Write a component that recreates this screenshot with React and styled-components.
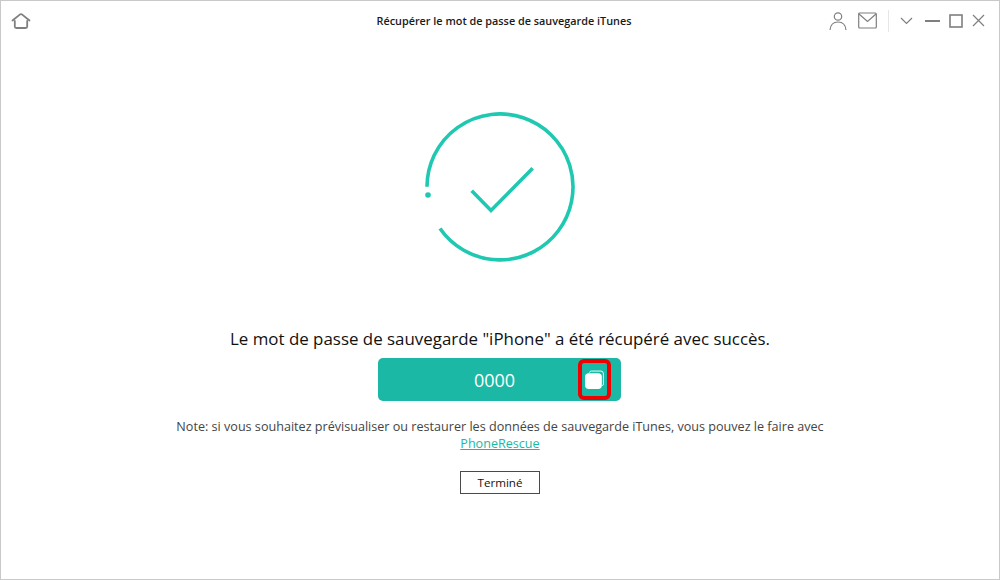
import React from "react"
import styled, { createGlobalStyle } from "styled-components"

const GlobalStyle = createGlobalStyle`
  html, body {
    margin: 0;
    padding: 0;
    background: #fff;
  }
  * {
    box-sizing: border-box;
  }
`

const Window = styled.div`
  width: 1000px;
  height: 580px;
  display: flex;
  flex-direction: column;
  background: #fff;
  border: 1px solid #c9c9c9;
  font-family: "Open Sans", "Noto Sans", sans-serif;
  color: #111;
  overflow: hidden;
`

const TitleBar = styled.header`
  height: 39px;
  flex: none;
  display: grid;
  grid-template-columns: 200px 1fr 200px;
  align-items: center;
`

const HomeButton = styled.div`
  display: flex;
  padding-left: 10px;
`

const Title = styled.h1`
  margin: 0;
  padding-left: 8px;
  text-align: center;
  font-size: 10.85px;
  font-weight: 600;
  color: #1a1a1a;
`

const WindowTools = styled.div`
  display: flex;
  justify-content: flex-end;
  align-items: center;
  padding-right: 14px;
`

const Divider = styled.span`
  width: 1px;
  height: 22px;
  background: #e6e6e6;
  margin: 0 10px 0 11px;
`

const Tool = styled.svg`
  display: block;
  flex: none;
  margin-left: ${(p) => p.$gap || 0}px;
  fill: none;
  stroke: #7f7f7f;
  stroke-width: ${(p) => p.$weight || 1.2};
`

const Main = styled.main`
  flex: 1;
  display: flex;
  flex-direction: column;
  align-items: center;
  padding-top: 70px;
`

const Message = styled.p`
  margin: 58px 0 0;
  font-size: 16.9px;
  line-height: 22px;
  color: #111;
`

const Result = styled.div`
  position: relative;
  width: 243px;
  height: 43px;
  margin: 8px 1px 0 0;
  padding-right: 10px;
  border-radius: 5px;
  background: #1ab8a5;
  display: flex;
  align-items: center;
  justify-content: center;
  color: #fff;
  font-size: 18px;
`

const CopyHighlight = styled.div`
  position: absolute;
  top: 1px;
  left: 200px;
  width: 33px;
  height: 41px;
  border: 4px solid #f00000;
  border-radius: 6px;
  display: flex;
  align-items: center;
  justify-content: center;
`

const Note = styled.p`
  margin: 17px 0 0;
  width: 700px;
  text-align: center;
  font-size: 12.6px;
  line-height: 17px;
  color: #444;
`

const NoteLink = styled.a`
  color: #1ab8a5;
  text-decoration: underline;
`

const DoneButton = styled.button`
  width: 80px;
  height: 23px;
  margin-top: 19px;
  padding: 0;
  background: #fff;
  border: 1px solid #4a4a4a;
  border-radius: 0;
  font-family: inherit;
  font-size: 11.6px;
  color: #111;
`

const SuccessIcon = () => (
  <svg width="160" height="160" viewBox="0 0 160 160" fill="none" stroke="#1fc8b0" strokeWidth="3.6">
    {/* center of the ring sits at 80,77 */}
    <path d="M7 76.7 A73 73 0 1 1 20 118.5" />
    <circle cx="8" cy="85" r="2.8" fill="#1fc8b0" stroke="none" />
    <path d="M51.7 80.7 L71 100.4 L112.7 58.3" />
  </svg>
)

const App = () => {
  return (
    <>
      <GlobalStyle />
      <Window>
        <TitleBar>
          <HomeButton>
            <svg width="20" height="18" viewBox="0 0 20 18" fill="none" stroke="#7f7f7f" strokeWidth="1.8" strokeLinejoin="round" strokeLinecap="round">
              <path d="M1.5 8.5 L8.8 2.6 Q10 1.8 11.2 2.6 L18.5 8.5" />
              <path d="M3.8 9 V14.5 Q3.8 16 5.3 16 H14.7 Q16.2 16 16.2 14.5 V9" />
            </svg>
          </HomeButton>
          <Title>Récupérer le mot de passe de sauvegarde iTunes</Title>
          <WindowTools>
            <Tool width="18" height="20" viewBox="0 0 18 20">
              <circle cx="9" cy="5.5" r="3.7" />
              <path d="M1 19 C1.5 13.5 5 11 9 11 C13 11 16.5 13.5 17 19" />
            </Tool>
            <Tool width="19" height="17" viewBox="0 0 19 17" $gap={11}>
              <rect x="0.7" y="1" width="17.6" height="15" rx="1" />
              <path d="M1 2 L9.5 9.5 L18 2" />
            </Tool>
            <Divider />
            <Tool width="13" height="8" viewBox="0 0 13 8" $gap={1}>
              <path d="M1 1 L6.5 6.5 L12 1" />
            </Tool>
            <Tool width="15" height="4" viewBox="0 0 15 4" $gap={12} $weight={2}>
              <path d="M0 2 H15" />
            </Tool>
            <Tool width="14" height="14" viewBox="0 0 14 14" $gap={9} $weight={1.6}>
              <rect x="1" y="1" width="12" height="12" />
            </Tool>
            <Tool width="13" height="13" viewBox="0 0 13 13" $gap={9}>
              <path d="M1 1 L12 12 M12 1 L1 12" />
            </Tool>
          </WindowTools>
        </TitleBar>
        <Main>
          <SuccessIcon />
          <Message>Le mot de passe de sauvegarde "iPhone" a été récupéré avec succès.</Message>
          <Result>
            0000
            <CopyHighlight>
              <svg width="21" height="20" viewBox="0 0 20 19">
                <path d="M5 2.5 Q5.5 1 7 1 H16 Q18.5 1 18.5 3.5 V13 Q18.5 14.5 17.5 15" fill="none" stroke="#fff" strokeWidth="0.9" />
                <rect x="1" y="3" width="16" height="15" rx="3.5" fill="#fff" />
              </svg>
            </CopyHighlight>
          </Result>
          <Note>
            Note: si vous souhaitez prévisualiser ou restaurer les données de sauvegarde iTunes, vous pouvez le faire avec
            <br />
            <NoteLink>PhoneRescue</NoteLink>
          </Note>
          <DoneButton>Terminé</DoneButton>
        </Main>
      </Window>
    </>
  )
}

export default App
